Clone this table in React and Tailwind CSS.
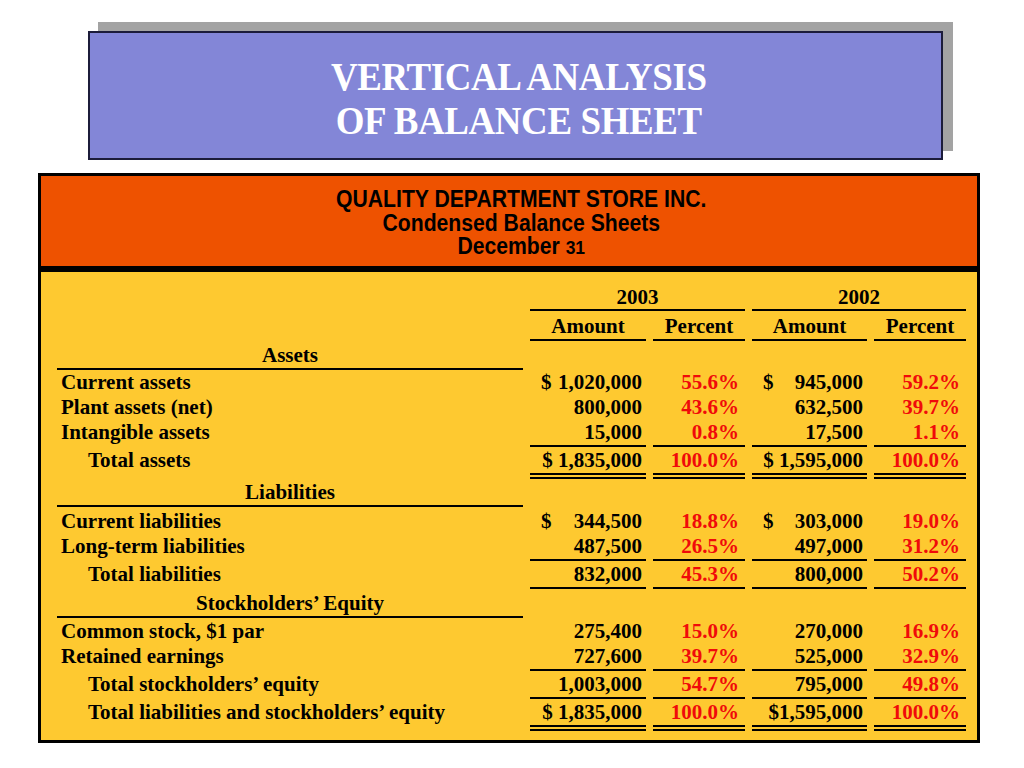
const serif = { fontFamily: '"Liberation Serif", "Times New Roman", serif' };

const rows = [
  { kind: "section", label: "Assets", pt: "pt-[2px]" },
  { label: "Current assets", a1: ["$", "1,020,000"], p1: "55.6%", a2: ["$", "945,000"], p2: "59.2%", pt: "pt-0" },
  { label: "Plant assets (net)", a1: "800,000", p1: "43.6%", a2: "632,500", p2: "39.7%", pt: "pt-0" },
  { label: "Intangible assets", a1: "15,000", p1: "0.8%", a2: "17,500", p2: "1.1%", pt: "pt-0", line: "single" },
  { label: "Total assets", total: true, a1: "$ 1,835,000", p1: "100.0%", a2: "$ 1,595,000", p2: "100.0%", pt: "pt-[1px]", line: "double" },
  { kind: "section", label: "Liabilities", pt: "pt-[1px]" },
  { label: "Current liabilities", a1: ["$", "344,500"], p1: "18.8%", a2: ["$", "303,000"], p2: "19.0%", pt: "pt-[2px]" },
  { label: "Long-term liabilities", a1: "487,500", p1: "26.5%", a2: "497,000", p2: "31.2%", pt: "pt-0", line: "single" },
  { label: "Total liabilities", total: true, a1: "832,000", p1: "45.3%", a2: "800,000", p2: "50.2%", pt: "pt-[1px]", line: "single" },
  { kind: "section", label: "Stockholders\u2019 Equity", pt: "pt-[2px]" },
  { label: "Common stock, $1 par", a1: "275,400", p1: "15.0%", a2: "270,000", p2: "16.9%", pt: "pt-[1px]" },
  { label: "Retained earnings", a1: "727,600", p1: "39.7%", a2: "525,000", p2: "32.9%", pt: "pt-0", line: "single" },
  { label: "Total stockholders\u2019 equity", total: true, a1: "1,003,000", p1: "54.7%", a2: "795,000", p2: "49.8%", pt: "pt-[1px]", line: "single" },
  { label: "Total liabilities and stockholders\u2019 equity", total: true, a1: "$ 1,835,000", p1: "100.0%", a2: "$1,595,000", p2: "100.0%", pt: "pt-[1px]", line: "double" },
];

function lineClass(line) {
  if (line === "double") return "border-b-[6px] border-double border-black";
  if (line === "single") return "border-b-2 border-black";
  return "";
}

function Amount({ value, line, pt }) {
  const base = `${pt} ${lineClass(line)} leading-[25px]`;
  if (Array.isArray(value)) {
    return (
      <div className={`${base} flex justify-between pl-[11px] pr-[4px]`}>
        <span>{value[0]}</span>
        <span>{value[1]}</span>
      </div>
    );
  }
  return <div className={`${base} text-right pr-[4px]`}>{value}</div>;
}

function Percent({ value, line, pt }) {
  return (
    <div className={`${pt} ${lineClass(line)} leading-[25px] text-right pr-[6px] text-[#f00a0a]`}>
      {value}
    </div>
  );
}

function Row({ row }) {
  if (row.kind === "section") {
    return (
      <div className="contents">
        <div className={`${row.pt} leading-[25px] text-center border-b-2 border-black`}>{row.label}</div>
        <div className={`${row.pt} border-b-2 border-transparent`} />
        <div className={`${row.pt} border-b-2 border-transparent`} />
        <div className={`${row.pt} border-b-2 border-transparent`} />
        <div className={`${row.pt} border-b-2 border-transparent`} />
      </div>
    );
  }
  const spacer =
    row.line === "double"
      ? "border-b-[6px] border-transparent"
      : row.line === "single"
      ? "border-b-2 border-transparent"
      : "";
  return (
    <div className="contents">
      <div className={`${row.pt} ${spacer} leading-[25px] ${row.total ? "pl-[31px]" : "pl-[4px]"} whitespace-nowrap`}>
        {row.label}
      </div>
      <Amount value={row.a1} line={row.line} pt={row.pt} />
      <Percent value={row.p1} line={row.line} pt={row.pt} />
      <Amount value={row.a2} line={row.line} pt={row.pt} />
      <Percent value={row.p2} line={row.line} pt={row.pt} />
    </div>
  );
}

export default function App() {
  return (
    <div className="w-[1024px] h-[768px] bg-white overflow-hidden">
      <div className="pt-[31px] pl-[88px]">
        <div
          className="w-[855px] h-[129px] bg-[#8386d7] border-2 border-[#1c1c3a] shadow-[10px_-9px_0_#a3a3a3] flex flex-col items-center justify-center pt-[4px] pl-[6px] text-white font-bold"
          style={serif}
        >
          <div className="scale-x-[0.9] text-[41px] leading-[44px] tracking-[-0.4px] text-center">
            <div>VERTICAL ANALYSIS</div>
            <div>OF BALANCE SHEET</div>
          </div>
        </div>
      </div>

      <div className="mt-[13px] ml-[38px] w-[942px] border-[3px] border-black bg-[#fec930]">
        <div
          className="h-[96px] bg-[#ee5200] border-b-[6px] border-black pt-[12px] pl-[24px] flex justify-center text-black font-bold"
          style={{ fontFamily: '"Liberation Sans", Arial, sans-serif' }}
        >
          <div className="scale-x-[0.92] text-center text-[23px] leading-[23.5px]">
            <div>QUALITY DEPARTMENT STORE INC.</div>
            <div>Condensed Balance Sheets</div>
            <div>
              December <span className="text-[19px]">31</span>
            </div>
          </div>
        </div>

        <div className="pt-[13px] pl-[16px] pb-[9px] text-black font-bold text-[21px]" style={serif}>
          <div className="grid grid-cols-[466px_116px_92px_115px_92px] gap-x-[7px]">
            <div />
            <div className="col-span-2 text-center leading-[24px] border-b-2 border-black">2003</div>
            <div className="col-span-2 text-center leading-[24px] border-b-2 border-black">2002</div>

            <div className="pt-[2px] border-b-2 border-transparent" />
            <div className="pt-[2px] leading-[26px] text-center border-b-2 border-black">Amount</div>
            <div className="pt-[2px] leading-[26px] text-center border-b-2 border-black">Percent</div>
            <div className="pt-[2px] leading-[26px] text-center border-b-2 border-black">Amount</div>
            <div className="pt-[2px] leading-[26px] text-center border-b-2 border-black">Percent</div>

            {rows.map((row, i) => (
              <Row key={i} row={row} />
            ))}
          </div>
        </div>
      </div>
    </div>
  );
}
